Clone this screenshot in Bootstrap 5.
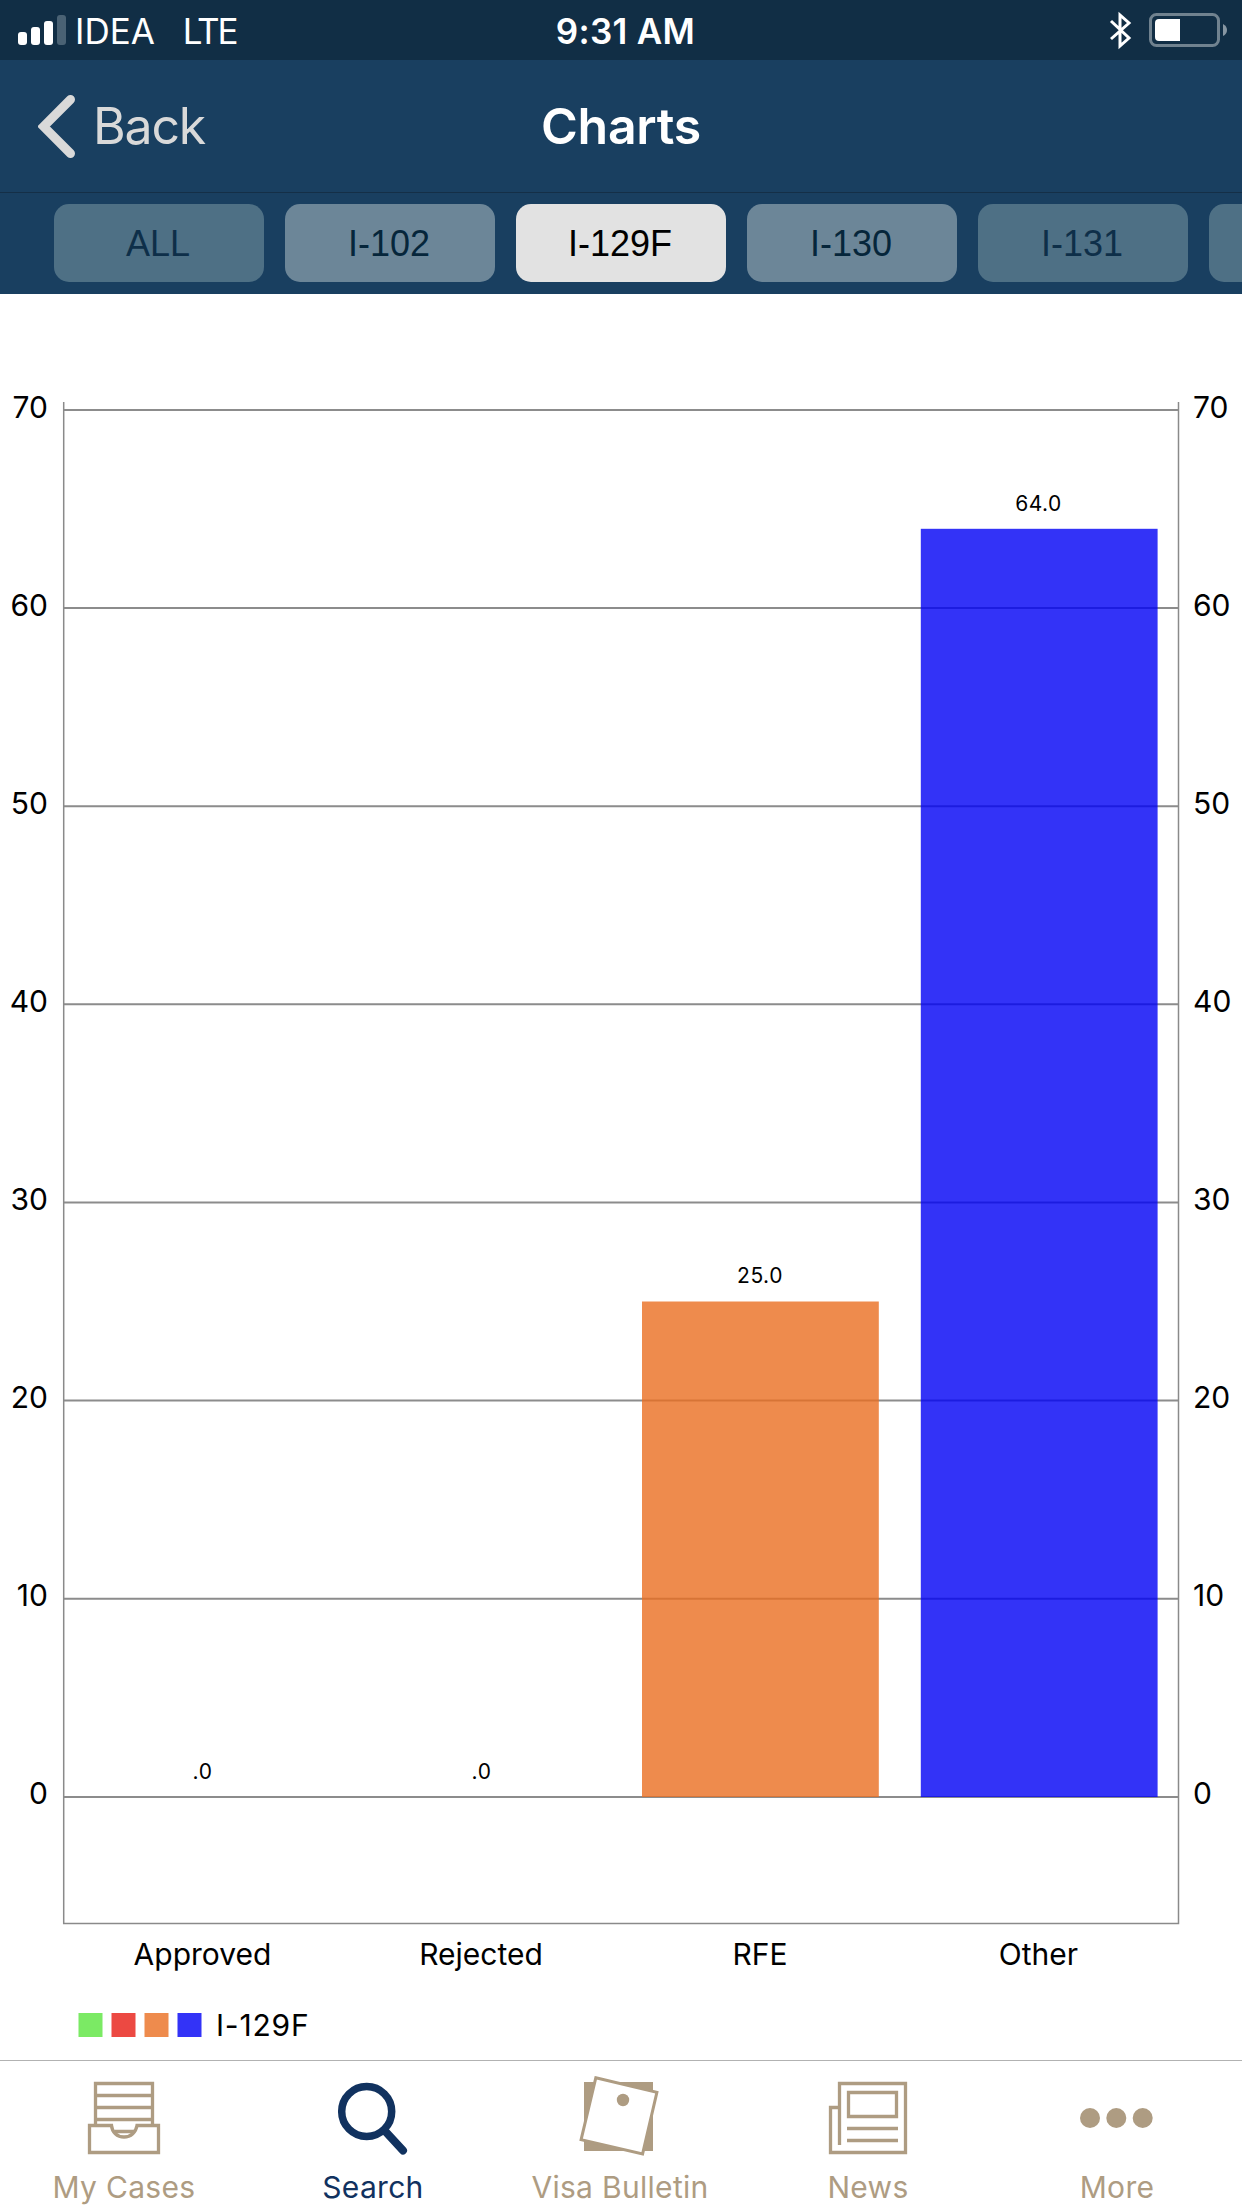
<!DOCTYPE html>
<html lang="en">
<head>
<meta charset="utf-8">
<meta name="viewport" content="width=device-width, initial-scale=1">
<title>Charts</title>
<link href="https://cdn.jsdelivr.net/npm/bootstrap@5.3.0/dist/css/bootstrap.min.css" rel="stylesheet">
<style>
  body { font-family: Inter, "Liberation Sans", sans-serif; background: #fff; color: #000; width: 1242px; height: 2208px; overflow: hidden; }
  .status-bar { height: 60px; background: #112e45; color: #fff; font-size: 35px; line-height: 60px; padding: 0 14px 0 18px; }
  .status-side { width: 500px; }
  .status-text { padding-top: 2px; }
  .carrier { font-weight: 400; margin-left: 9px; letter-spacing: 0; }
  .network { font-weight: 400; margin-left: 28px; letter-spacing: -2.2px; }
  .clock { font-weight: 600; letter-spacing: .3px; padding-left: 5px; }
  .title-bar { height: 133px; background: #193f60; border-bottom: 1px solid #142f47; font-size: 50px; line-height: 60px; padding: 0 38px; }
  .title-side { width: 400px; }
  .back-link { color: #d9d9d9; text-decoration: none; }
  .back-label { margin-left: 17px; letter-spacing: -1.2px; }
  .screen-title { color: #fff; font-weight: 600; font-size: 50px; line-height: 60px; letter-spacing: -.3px; }
  .form-tabs { height: 101px; background: #193f60; gap: 21px; padding: 11px 0 0 54px; overflow: hidden; }
  .form-tabs .btn { --bs-btn-bg: #6c8698; --bs-btn-color: #06263b; --bs-btn-border-width: 0; width: 210px; height: 78px; flex: none; padding: 1px 2px 0 0; border-radius: 15px; font: 36px/76px "Liberation Sans", Arial, sans-serif; }
  .form-tabs .btn.dim { --bs-btn-bg: #4e7085; --bs-btn-color: #0e2f49; }
  .form-tabs .btn.active { --bs-btn-active-bg: #e2e2e2; --bs-btn-active-color: #000; }
  .chart { height: 1766px; }
  .chart text { font-family: Inter, sans-serif; fill: #000; }
  .axis-text { font-size: 30px; }
  .value-text { font-size: 21px; letter-spacing: .5px; }
  .legend-text { letter-spacing: .8px; }
  .tab-bar { height: 148px; border-top: 1px solid #b2b2b2; background: #fff; }
  .tab-item { width: 248px; flex: none; padding-top: 9px; color: #ae9c82; text-decoration: none; font-size: 30px; line-height: 36px; letter-spacing: .3px; }
  .tab-item.current { color: #11325f; }
  .tab-item svg { height: 88px; flex: none; }
  .tab-item span { margin-top: 11px; white-space: nowrap; }
  .tab-item.current span, .tab-item:last-child span { padding-left: 2px; }
</style>
</head>
<body class="d-flex flex-column">
<header class="status-bar d-flex align-items-center justify-content-between">
  <div class="status-side d-flex align-items-center">
    <svg width="48" height="30" fill="#fff"><rect y="17" width="9" height="13" rx="3"/><rect x="13" y="12" width="9" height="18" rx="3"/><rect x="26" y="6" width="9" height="24" rx="3"/><rect x="39" width="9" height="30" rx="3" fill="#4a6274"/></svg>
    <span class="status-text carrier">IDEA</span><span class="status-text network">LTE</span>
  </div>
  <div class="status-text clock text-nowrap">9:31 AM</div>
  <div class="status-side d-flex align-items-center justify-content-end">
    <svg width="119" height="40" fill="none"><path d="M2 11 20 28 11 36V5l9 8L2 29" stroke="#fff" stroke-width="3"/><rect x="41.500" y="4.500" width="68" height="31" rx="6" stroke="#70828f" stroke-width="3"/><path d="M50 9h21v22H50a4 4 0 0 1-4-4V13a4 4 0 0 1 4-4z" fill="#fff"/><path d="M114 14q4 2 4 6t-4 6z" fill="#8796a2"/></svg>
  </div>
</header>

<nav class="title-bar d-flex align-items-center justify-content-between">
  <div class="title-side d-flex"><a class="back-link d-flex align-items-center" href="#">
    <svg width="38" height="65" fill="none" stroke="#d9d9d9" stroke-width="9" stroke-linecap="round"><path d="M32.500 5.500 5.500 32.500 32.500 59.500"/></svg>
    <span class="back-label">Back</span></a></div>
  <h1 class="screen-title m-0">Charts</h1>
  <div class="title-side"></div>
</nav>

<div class="form-tabs d-flex">
  <button class="btn dim">ALL</button>
  <button class="btn">I-102</button>
  <button class="btn active">I-129F</button>
  <button class="btn">I-130</button>
  <button class="btn dim">I-131</button>
  <button class="btn dim" aria-label="Next form"></button>
</div>

<main class="chart">
  <svg class="d-block" width="1242" height="1766" viewBox="0 294 1242 1766">
    <g stroke="#8c8c8c" stroke-width="2">
      <path d="M64 410H1178M64 608H1178M64 806.300H1178M64 1004.300H1178M64 1202.500H1178M64 1400.600H1178M64 1598.700H1178M64 1797H1178"/>
    </g>
    <path d="M63.700 402V1923.500H1178.500V402" fill="none" stroke="#8a8a8a" stroke-width="1.500"/>
    <g fill-opacity=".8">
      <rect x="642" y="1301.500" width="236.800" height="495.500" fill="#ea6e20"/>
      <rect x="920.800" y="528.800" width="236.800" height="1268.200" fill="#0000f5"/>
    </g>
    <g class="axis-text" text-anchor="end">
      <text x="48" y="418">70</text><text x="48" y="616">60</text><text x="48" y="814">50</text><text x="48" y="1012">40</text>
      <text x="48" y="1210">30</text><text x="48" y="1408">20</text><text x="48" y="1606">10</text><text x="48" y="1804">0</text>
    </g>
    <g class="axis-text">
      <text x="1193" y="418">70</text><text x="1193" y="616">60</text><text x="1193" y="814">50</text><text x="1193" y="1012">40</text>
      <text x="1193" y="1210">30</text><text x="1193" y="1408">20</text><text x="1193" y="1606">10</text><text x="1193" y="1804">0</text>
    </g>
    <g class="value-text" text-anchor="middle">
      <text x="202.500" y="1779">.0</text><text x="481.500" y="1779">.0</text>
      <text x="760" y="1283">25.0</text><text x="1038.500" y="511">64.0</text>
    </g>
    <g class="axis-text" text-anchor="middle">
      <text x="202.500" y="1965">Approved</text><text x="481" y="1965">Rejected</text>
      <text x="760" y="1965">RFE</text><text x="1038.500" y="1965">Other</text>
    </g>
    <rect x="78.500" y="2013" width="24" height="24" fill="#7bea64"/>
    <rect x="111.500" y="2013" width="24" height="24" fill="#ec4942"/>
    <rect x="144.500" y="2013" width="24" height="24" fill="#ee8b4d"/>
    <rect x="177.500" y="2013" width="24" height="24" fill="#3333f7"/>
    <text class="axis-text legend-text" x="216" y="2036">I-129F</text>
  </svg>
</main>

<footer class="tab-bar d-flex">
  <a class="tab-item d-flex flex-column align-items-center" href="#">
    <svg width="100" fill="none" stroke="currentColor" stroke-width="3.300"><path d="M21.500 55.500V13.500H78.500V55.500M21.500 25.500H78.500M21.500 37.500H78.500M21.500 49.500H78.500M41 61.500H60"/><path d="M15.500 55.500H37.500C38 62 43 67 50 67S62 62 63 55.500H84.500V82.500H15.500Z"/></svg>
    <span>My Cases</span></a>
  <a class="tab-item current d-flex flex-column align-items-center" href="#">
    <svg width="100" fill="none" stroke="currentColor" stroke-width="7.500"><circle cx="44.700" cy="41.500" r="25"/><path d="M63 61 81 80.500" stroke-width="8" stroke-linecap="round"/></svg>
    <span>Search</span></a>
  <a class="tab-item d-flex flex-column align-items-center" href="#">
    <svg width="100" fill="currentColor"><path d="M14 12H83V81H14z"/><path d="M25.800 7.800 86.900 22.400 72.600 83.900 11.100 69.600z" fill="#fff" stroke="currentColor" stroke-width="3"/><circle cx="53" cy="30" r="6.200"/></svg>
    <span>Visa Bulletin</span></a>
  <a class="tab-item d-flex flex-column align-items-center" href="#">
    <svg width="100" fill="none" stroke="currentColor" stroke-width="3.300"><path d="M21.500 75V13.500H87.500V82.500H12.500V37.500H21.500M30.500 22.500H78.500V46.500H30.500zM29 58.500H80M29 70.500H80"/></svg>
    <span>News</span></a>
  <a class="tab-item d-flex flex-column align-items-center" href="#">
    <svg width="100" fill="currentColor"><circle cx="24" cy="48" r="10"/><circle cx="50.300" cy="48" r="10"/><circle cx="76.700" cy="48" r="10"/></svg>
    <span>More</span></a>
</footer>
<script src="https://cdn.jsdelivr.net/npm/bootstrap@5.3.0/dist/js/bootstrap.bundle.min.js"></script>
</body>
</html>
